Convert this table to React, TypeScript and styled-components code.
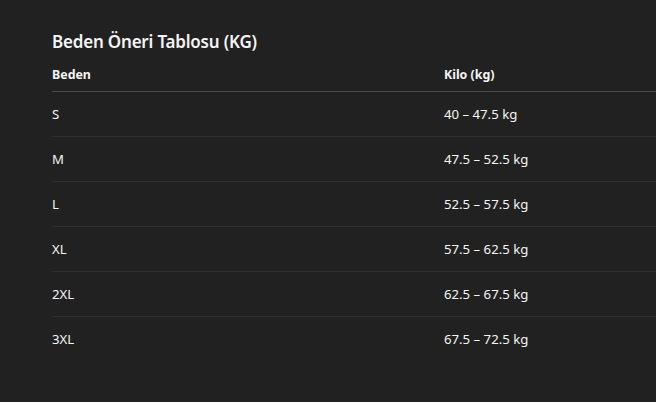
import styled, { createGlobalStyle } from 'styled-components';

const GlobalStyle = createGlobalStyle`
    html, body {
        margin: 0;
        padding: 0;
        background: #212121;
        overflow: hidden;
    }
`;

const Page = styled.div`
    width: 656px;
    height: 402px;
    background: #212121;
    color: #f4f4f4;
    font-family: 'Noto Sans', 'Open Sans', sans-serif;
    padding: 30px 0 0 52px;
    box-sizing: border-box;
    overflow: hidden;
`;

const Title = styled.h2`
    margin: 0 0 7px;
    font-size: 17px;
    font-weight: 600;
    line-height: 24px;
    letter-spacing: -0.2px;
`;

const Table = styled.table`
    width: 784px;
    border-collapse: collapse;
    table-layout: fixed;
`;

const HeadCell = styled.th`
    text-align: left;
    font-size: 12.4px;
    font-weight: 700;
    line-height: 16px;
    padding: 6px 0 8px;
    border-bottom: 1px solid #4a4a4a;
`;

const Row = styled.tr`
    &:not(:last-child) td {
        border-bottom: 1px solid #2f2f2f;
    }
`;

const Cell = styled.td`
    font-size: 13.2px;
    line-height: 18px;
    height: 44px;
    padding: 0;
    vertical-align: middle;
`;

const rows: [string, string][] = [
    ['S', '40 – 47.5 kg'],
    ['M', '47.5 – 52.5 kg'],
    ['L', '52.5 – 57.5 kg'],
    ['XL', '57.5 – 62.5 kg'],
    ['2XL', '62.5 – 67.5 kg'],
    ['3XL', '67.5 – 72.5 kg'],
];

export default function App() {
    return (
        <Page>
            <GlobalStyle />
            <Title>Beden Öneri Tablosu (KG)</Title>
            <Table>
                <thead>
                    <tr>
                        <HeadCell>Beden</HeadCell>
                        <HeadCell>Kilo (kg)</HeadCell>
                    </tr>
                </thead>
                <tbody>
                    {rows.map(([size, kg]) => (
                        <Row key={size}>
                            <Cell>{size}</Cell>
                            <Cell>{kg}</Cell>
                        </Row>
                    ))}
                </tbody>
            </Table>
        </Page>
    );
}
